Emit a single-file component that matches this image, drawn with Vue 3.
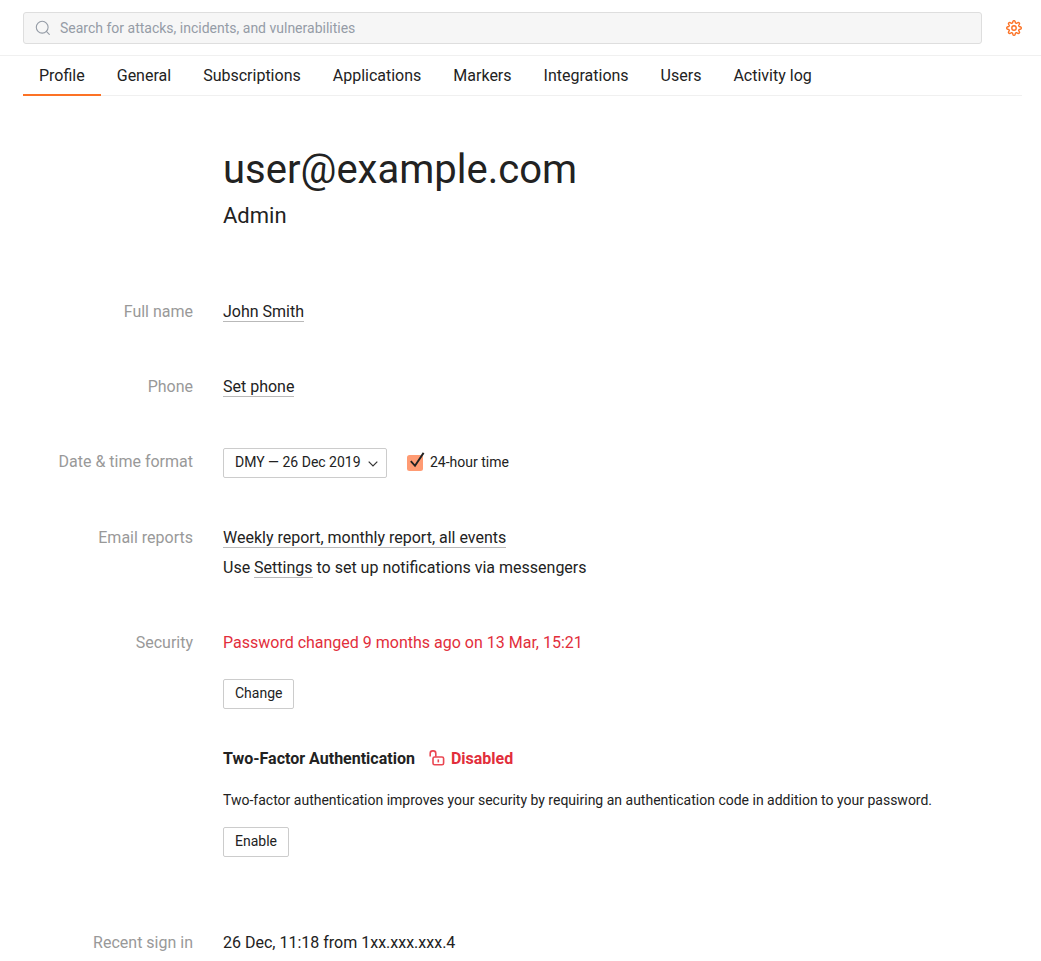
<script setup>
const tabs = ['Profile', 'General', 'Subscriptions', 'Applications', 'Markers', 'Integrations', 'Users', 'Activity log']

// Eight-lobed gear outline, sampled around a circle
const n = 96
const gear = Array.from({ length: n }, (_, i) => {
  const a = (i / n) * Math.PI * 2
  const r = 6.25 + 1.05 * Math.tanh(2 * Math.cos(8 * a))
  return `${(8 + r * Math.sin(a)).toFixed(2)},${(8 - r * Math.cos(a)).toFixed(2)}`
}).join(' ')
</script>

<template>
  <div class="page">
    <header class="topbar">
      <div class="search">
        <svg class="search-icon" width="16" height="16" viewBox="0 0 16 16" fill="none">
          <circle cx="7.2" cy="7.2" r="5.9" />
          <path d="M11.4 11.4L14.3 14.3" />
        </svg>
        <span>Search for attacks, incidents, and vulnerabilities</span>
      </div>
      <svg class="gear" width="16" height="16" viewBox="0 0 16 16" fill="none">
        <polygon :points="gear" />
        <circle cx="8" cy="8" r="2.2" />
      </svg>
    </header>

    <nav class="tabs">
      <a v-for="(tab, i) in tabs" :key="tab" class="tab" :class="{ active: i === 0 }">{{ tab }}</a>
    </nav>

    <main class="profile">
      <div class="heading">
        <h1>user@example.com</h1>
        <p>Admin</p>
      </div>

      <div class="row">
        <div class="label">Full name</div>
        <div><a class="link">John Smith</a></div>
      </div>

      <div class="row">
        <div class="label">Phone</div>
        <div><a class="link">Set phone</a></div>
      </div>

      <div class="row">
        <div class="label">Date &amp; time format</div>
        <div class="format">
          <div class="select">
            <span>DMY — 26 Dec 2019</span>
            <svg width="10" height="6" viewBox="0 0 10 6" fill="none"><path d="M0.7 0.7L5 5L9.3 0.7" /></svg>
          </div>
          <div class="check">
            <svg width="18" height="20" viewBox="0 0 18 20" fill="none">
              <rect x="0" y="3" width="16" height="16" rx="2.5" />
              <path d="M3.8 9.2L8 13.8L16.6 0.9" />
            </svg>
            <span>24-hour time</span>
          </div>
        </div>
      </div>

      <div class="row">
        <div class="label">Email reports</div>
        <div>
          <div><a class="link">Weekly report, monthly report, all events</a></div>
          <div>Use <a class="link">Settings</a> to set up notifications via messengers</div>
        </div>
      </div>

      <div class="row">
        <div class="label">Security</div>
        <div class="security">
          <div class="warning">Password changed 9 months ago on 13 Mar, 15:21</div>
          <button class="btn change">Change</button>
          <div class="tfa">
            <span>Two-Factor Authentication</span>
            <svg width="16" height="16" viewBox="0 0 16 16" fill="none">
              <path d="M1.2 6.6V3.4Q1.2 0.9 3.7 0.9H4.3Q6.8 0.9 6.8 3.4V6.8" />
              <rect x="4" y="7" width="10.6" height="7.8" rx="1.6" />
              <path d="M9.3 9.4V12.4" />
            </svg>
            <span class="disabled">Disabled</span>
          </div>
          <div class="note">Two-factor authentication improves your security by requiring an authentication code in addition to your password.</div>
          <button class="btn enable">Enable</button>
        </div>
      </div>

      <div class="row">
        <div class="label">Recent sign in</div>
        <div>26 Dec, 11:18 from 1xx.xxx.xxx.4</div>
      </div>
    </main>
  </div>
</template>

<style>
html, body { background: #fff; overflow: hidden; }
</style>

<style scoped>
.page {
  width: 1041px;
  height: 961px;
  overflow: hidden;
  background: #fff;
  color: #222;
  font: 16px/30px Roboto, sans-serif;
}
.topbar {
  display: flex;
  align-items: center;
  box-sizing: border-box;
  height: 56px;
  padding: 0 19px 0 23px;
  border-bottom: 1px solid #f0f0f0;
}
.search {
  display: flex;
  align-items: center;
  box-sizing: border-box;
  width: 959px;
  height: 32px;
  padding-left: 11px;
  border: 1px solid #dedede;
  border-radius: 3px;
  background: #f6f6f6;
  color: #959ca6;
  font-size: 14px;
}
.search-icon { margin-right: 9px; stroke: #959ca6; stroke-width: 1.1; stroke-linecap: round; }
.gear { margin-left: 24px; stroke: #fc7225; stroke-width: 1.4; stroke-linejoin: round; }
.tabs {
  display: flex;
  box-sizing: border-box;
  height: 40px;
  margin: 0 19px 0 23px;
  box-shadow: inset 0 -1px #f0f0f0;
}
.tab { padding: 0 16px; line-height: 39px; }
.tab.active { box-shadow: inset 0 -2px #fc7225; }
.profile { display: flex; flex-direction: column; gap: 45px; }
.heading { height: 156px; padding-left: 223px; }
h1 { margin: 45px 0 0; font-size: 40px; font-weight: 400; line-height: 58px; }
.heading p { margin: 2px 0 0; font-size: 22px; line-height: 30px; }
.row { display: grid; grid-template-columns: 193px 1fr; column-gap: 30px; }
.label { color: #999; text-align: right; }
.link { display: inline-block; line-height: 18px; border-bottom: 1px solid #b9b9b9; }
.format { display: flex; height: 31px; font-size: 14px; }
.select {
  display: flex;
  align-items: center;
  box-sizing: border-box;
  width: 164px;
  height: 30px;
  margin-top: 1px;
  padding: 0 0 2px 11px;
  border: 1px solid #ccc;
  border-radius: 2px;
  line-height: 26px;
}
.select svg { margin: 4px 0 0 7px; stroke: #333; stroke-width: 1.2; }
.check { display: flex; height: 30px; margin-left: 20px; }
.check svg { margin: 5px 5px 0 0; overflow: visible; }
.check rect { fill: #ff9b73; }
.check path { stroke: #222; stroke-width: 1.9; }
.security { display: flex; flex-direction: column; align-items: flex-start; height: 255px; }
.warning { color: #e22e3b; }
.btn {
  height: 30px;
  padding: 0 11px 2px;
  border: 1px solid #ccc;
  border-radius: 2px;
  background: #fff;
  color: #222;
  font: 14px/26px Roboto, sans-serif;
}
.change { margin-top: 21px; }
.tfa { display: flex; align-items: center; margin-top: 35px; font-weight: 700; }
.tfa svg { margin: 0 6px 2px 14px; stroke: #ea4752; stroke-width: 1.6; }
.disabled { color: #e22e3b; }
.note { margin-top: 16px; font-size: 14px; line-height: 20px; }
.enable { margin-top: 17px; }
</style>
